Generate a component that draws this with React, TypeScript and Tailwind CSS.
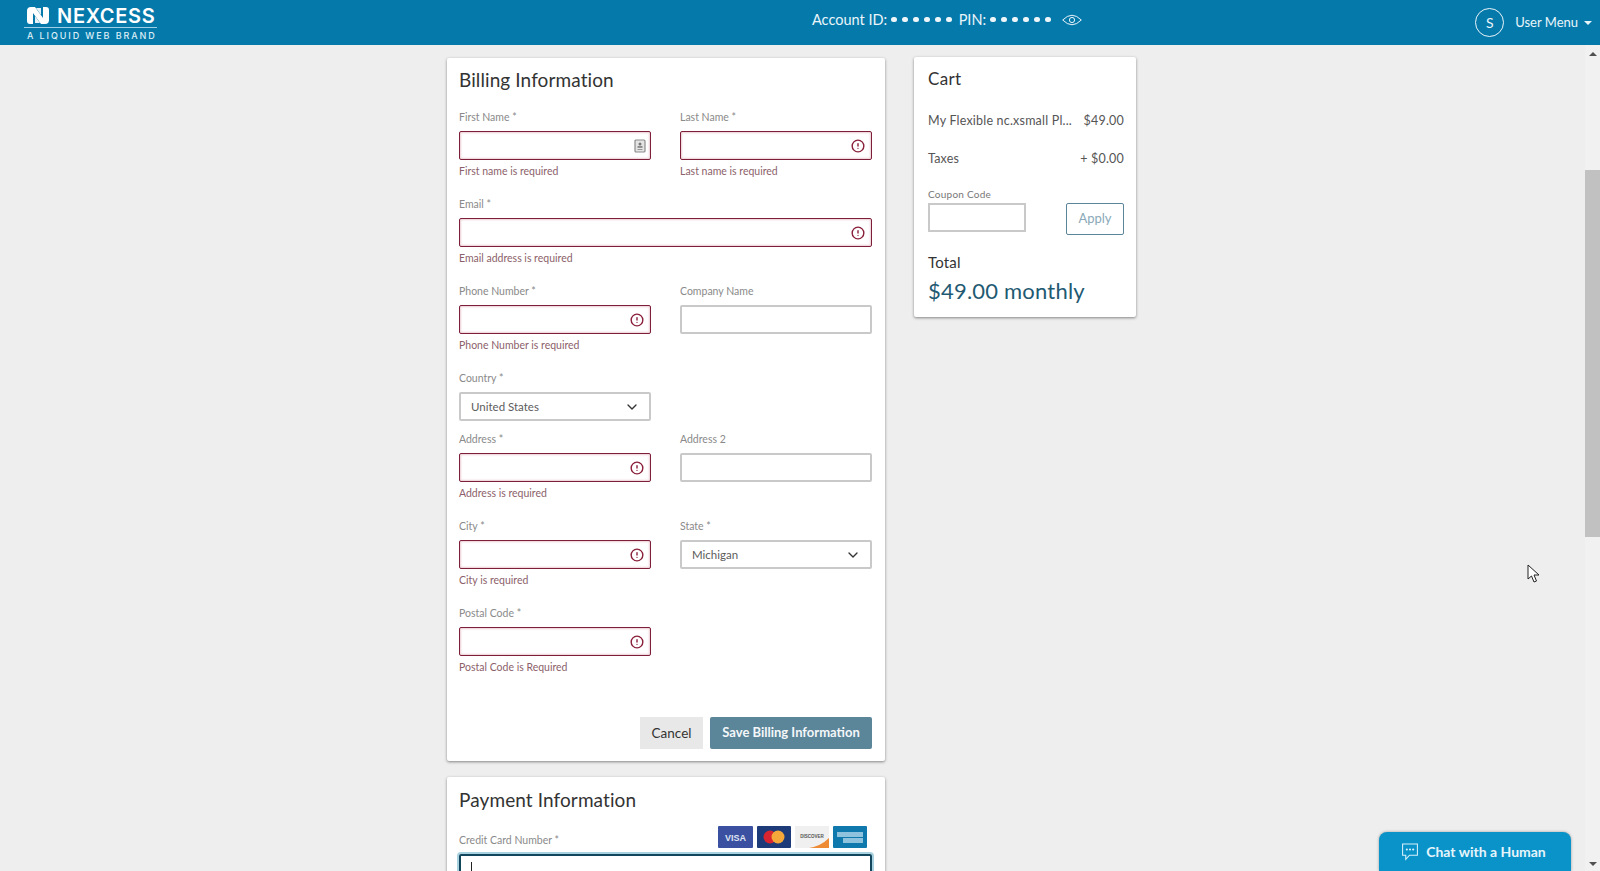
import React from "react";
import { ChevronDown, CircleAlert } from "lucide-react";

function Contact() {
  return (
    <svg width="12" height="14" viewBox="0 0 12 14" className="absolute right-[4px] top-[7px]">
      <rect x="1" y="1" width="10" height="12" rx="1" fill="#e4e4e4" stroke="#8b8b8b" strokeWidth="1.2" />
      <circle cx="6" cy="5" r="1.5" fill="#777" />
      <rect x="3.5" y="7.2" width="5" height="1.5" fill="#777" />
      <rect x="3.5" y="10" width="5" height="1" fill="#999" />
    </svg>
  );
}

function Field({ label, error, contact, select, wide }: { label: string; error?: string; contact?: boolean; select?: string; wide?: boolean }) {
  const invalid = !!error;
  return (
    <div className={wide ? "col-span-2" : ""}>
      <div className="h-5 pt-px text-[10.5px] leading-5 text-[#8a8a8a]">{label}</div>
      <div
        className={
          "relative mt-[5px] flex h-[29px] items-center rounded-[2px] bg-white " +
          (invalid
            ? "border border-[#7d1f38] shadow-[inset_0_0_2px_1px_#eccdd4]"
            : "border-2 border-[#c9c9c9]")
        }
      >
        {select && <span className="pl-[10px] text-[11.5px] text-[#5c5c5c]">{select}</span>}
        {select && <ChevronDown size={16} strokeWidth={2} className="absolute right-[9px] top-[5px] text-[#333333]" />}
        {contact && <Contact />}
        {invalid && !contact && <CircleAlert size={14} strokeWidth={2.4} className="absolute right-[6px] top-[7px] text-[#8a1f3a]" />}
      </div>
      {error ? (
        <div className="mb-[12px] mt-[1px] h-5 text-[10.5px] leading-5 text-[#8c5f6a]">{error}</div>
      ) : (
        <div className="mb-[7px]" />
      )}
    </div>
  );
}

function Dots() {
  return (
    <span className="mx-[4px] flex gap-[5.5px]">
      {[0, 1, 2, 3, 4, 5].map((i) => (
        <span key={i} className="h-[5.5px] w-[5.5px] rounded-full bg-[#eef6fa]" />
      ))}
    </span>
  );
}

function CardLogos() {
  return (
    <div className="mb-[2px] mr-[5px] flex gap-[4px]">
      <svg width="35" height="22" viewBox="0 0 35 22">
        <rect width="35" height="22" rx="1" fill="#3b50a0" />
        <text x="17.5" y="15" textAnchor="middle" fontSize="9" fontWeight="800" fontFamily="Liberation Sans" fill="#dfe4f3">VISA</text>
      </svg>
      <svg width="34" height="22" viewBox="0 0 34 22">
        <rect width="34" height="22" rx="1" fill="#1c3b78" />
        <circle cx="13" cy="11" r="6.5" fill="#d9252f" />
        <circle cx="21" cy="11" r="6.5" fill="#f4a83a" />
      </svg>
      <svg width="34" height="22" viewBox="0 0 34 22">
        <rect width="34" height="22" fill="#f0f0f0" />
        <path d="M34 12 L34 22 L14 22 Q26 20 34 12 Z" fill="#ee8a33" />
        <text x="17" y="12" textAnchor="middle" fontSize="4.5" fontWeight="700" fontFamily="Liberation Sans" fill="#555555">DISCOVER</text>
      </svg>
      <svg width="34" height="22" viewBox="0 0 34 22">
        <rect width="34" height="22" rx="1" fill="#0f78ad" />
        <rect x="4" y="6" width="26" height="5" fill="#8fc2dd" />
        <rect x="10" y="12" width="20" height="5" fill="#8fc2dd" />
      </svg>
    </div>
  );
}

function Logo() {
  return (
    <div className="w-[133px] font-['Inter',sans-serif] text-white">
      <div className="flex h-[21px] items-center gap-[8px] pb-[2px] pl-[3px]">
        <svg width="22" height="17" viewBox="0 0 22 17">
          <path d="M0 4 Q0 0 4 0 L8 0 L16 11 L16 0 L19 0 Q22 0 22 3 L22 13 Q22 17 18 17 L14 17 L6 6 L6 17 L3 17 Q0 17 0 14 Z" fill="#ffffff" />
          <path d="M8 9 L13 16 L8 16 Z M14 8 L9 1 L14 1 Z" fill="#ffffff" opacity="0.9" />
        </svg>
        <span className="text-[20px] font-semibold leading-none tracking-[0.7px]">NEXCESS</span>
      </div>
      <div className="h-px bg-[#9fd0e6]" />
      <div className="mt-[3px] whitespace-nowrap pl-[3px] text-[9px] font-medium leading-[10px] tracking-[1.9px] text-[#dceff7]">A LIQUID WEB BRAND</div>
    </div>
  );
}

export default function App() {
  const cardClass = "bg-white rounded-[2px] shadow-[0_1px_3px_rgba(0,0,0,0.45)]";
  return (
    <div className="relative flex h-[871px] w-[1600px] flex-col overflow-hidden bg-[#eeeeee] font-['Lato',sans-serif] text-[#333333]">
      <header className="flex h-[45px] shrink-0 bg-[#0679ab] text-[#eaf5fa]">
        <div className="w-[812px] pl-6 pt-[6px]">
          <Logo />
        </div>
        <div className="flex h-[39px] items-center text-[14.5px]">
          <span>Account ID:</span>
          <Dots />
          <span className="ml-[3px]">PIN:</span>
          <Dots />
          <svg width="20" height="12" viewBox="0 0 20 12" fill="none" stroke="#eaf5fa" strokeWidth="1" className="ml-[7px]">
            <path d="M0.7 6 Q10 -3.5 19.3 6 Q10 15.5 0.7 6 Z" />
            <circle cx="10" cy="6" r="2.6" />
          </svg>
        </div>
        <div className="ml-auto flex items-center pr-[8px]">
          <span className="flex h-[29px] w-[29px] items-center justify-center rounded-full border border-[#eaf5fa] text-[14px]">S</span>
          <span className="ml-[11px] text-[13px]">User Menu</span>
          <span className="ml-[6px] h-0 w-0 border-x-[4px] border-t-[4px] border-x-transparent border-t-[#eaf5fa]" />
        </div>
      </header>
      <div className="flex min-h-0 flex-1">
        <main className="flex flex-1 items-start overflow-hidden pl-[447px]">
          <div className="mt-[13px] w-[438px]">
            <section className={cardClass + " pb-[12px] pl-[12px] pr-[13px]"}>
              <h2 className="mb-[4px] flex h-[44px] items-center text-[19px] font-normal tracking-[0.1px] text-[#333333]">Billing Information</h2>
              <div className="grid grid-cols-[192px_192px] gap-x-[29px]">
                <Field label="First Name *" error="First name is required" contact />
                <Field label="Last Name *" error="Last name is required" />
                <Field label="Email *" error="Email address is required" wide />
                <Field label="Phone Number *" error="Phone Number is required" />
                <Field label="Company Name" />
                <Field label="Country *" select="United States" />
                <div />
                <Field label="Address *" error="Address is required" />
                <Field label="Address 2" />
                <Field label="City *" error="City is required" />
                <Field label="State *" select="Michigan" />
                <Field label="Postal Code *" error="Postal Code is Required" />
              </div>
              <div className="mt-[28px] flex justify-end gap-[7px]">
                <button className="h-[32px] w-[63px] bg-[#e8e8e8] text-[13.5px] text-[#333333]">Cancel</button>
                <button className="h-[32px] w-[162px] rounded-[2px] bg-[#5b8599] text-[13px] font-bold text-[#f4f7f9]">Save Billing Information</button>
              </div>
            </section>
            <section className={cardClass + " mt-[16px] h-[200px] pl-[12px] pr-[13px]"}>
              <h2 className="flex h-[46px] items-center text-[19px] font-normal tracking-[0.1px] text-[#333333]">Payment Information</h2>
              <div className="flex h-[27px] items-end justify-between">
                <span className="text-[10.5px] leading-5 text-[#8a8a8a]">Credit Card Number *</span>
                <CardLogos />
              </div>
              <div className="mt-[4px] flex h-[40px] items-start rounded-[2px] border-2 border-[#12465c] pl-[10px] pt-[6px] shadow-[0_0_0_2px_#a9d2e0]">
                <span className="h-[14px] w-px bg-[#222222]" />
              </div>
            </section>
          </div>
          <aside className={cardClass + " ml-[29px] mt-[12px] h-[260px] w-[222px] pl-[14px] pr-[12px]"}>
            <h3 className="flex h-[44px] items-center text-[17px] font-normal tracking-[0.3px] text-[#333333]">Cart</h3>
            <div className="mt-[11px] flex justify-between text-[12.5px] leading-[18px] tracking-[0.2px] text-[#555555]">
              <span>My Flexible nc.xsmall Pl...</span>
              <span>$49.00</span>
            </div>
            <div className="mt-[20px] flex justify-between text-[12.5px] leading-[18px] tracking-[0.2px] text-[#555555]">
              <span>Taxes</span>
              <span>+ $0.00</span>
            </div>
            <div className="mt-[19px] text-[10px] leading-[14px] tracking-[0.25px] text-[#777777]">Coupon Code</div>
            <div className="flex items-start justify-between">
              <div className="mt-[2px] h-[29px] w-[98px] border-2 border-[#c9c9c9] bg-white" />
              <button className="mt-[2px] h-[32px] w-[58px] rounded-[2px] border border-[#5b8599] bg-white text-[13px] text-[#8aa9b8]">Apply</button>
            </div>
            <div className="mt-[17px] text-[15px] leading-[20px] tracking-[0.2px] text-[#333333]">Total</div>
            <div className="mt-[4px] text-[22px] leading-[30px] tracking-[0.2px] text-[#1f5a72]">$49.00 monthly</div>
          </aside>
        </main>
        <div className="flex w-[15px] shrink-0 flex-col items-center bg-[#f1f1f1] pt-[7px]">
          <span className="h-0 w-0 border-x-[4px] border-b-[4px] border-x-transparent border-b-[#505050]" />
          <span className="mt-[114px] h-[367px] w-full bg-[#c1c1c1]" />
          <span className="mt-auto mb-[5px] h-0 w-0 border-x-[4px] border-t-[4px] border-x-transparent border-t-[#505050]" />
        </div>
      </div>
      <button className="absolute bottom-0 left-[1379px] flex h-[39px] w-[192px] items-center justify-center gap-[7px] rounded-t-[8px] bg-[#0a93c9] pr-[3px] text-[14px] font-bold text-[#e6f5fb] shadow-[0_0_3px_rgba(0,0,0,0.35)]">
        <svg width="18" height="18" viewBox="0 0 17 17" fill="none" stroke="#d7f0fa" strokeWidth="1">
          <path d="M1.5 1 H15.5 V11.5 H8 L4.5 15.5 V11.5 H1.5 Z" />
          <circle cx="5.5" cy="6.2" r="0.5" fill="#d7f0fa" />
          <circle cx="8.5" cy="6.2" r="0.5" fill="#d7f0fa" />
          <circle cx="11.5" cy="6.2" r="0.5" fill="#d7f0fa" />
        </svg>
        Chat with a Human
      </button>
      <svg width="13" height="20" viewBox="0 0 13 20" className="absolute left-[1527px] top-[564px]">
        <path d="M1 1 L1 15 L4.5 12 L7 18 L9.5 17 L7 11 L12 11 Z" fill="#ffffff" stroke="#222222" strokeWidth="1" />
      </svg>
    </div>
  );
}
